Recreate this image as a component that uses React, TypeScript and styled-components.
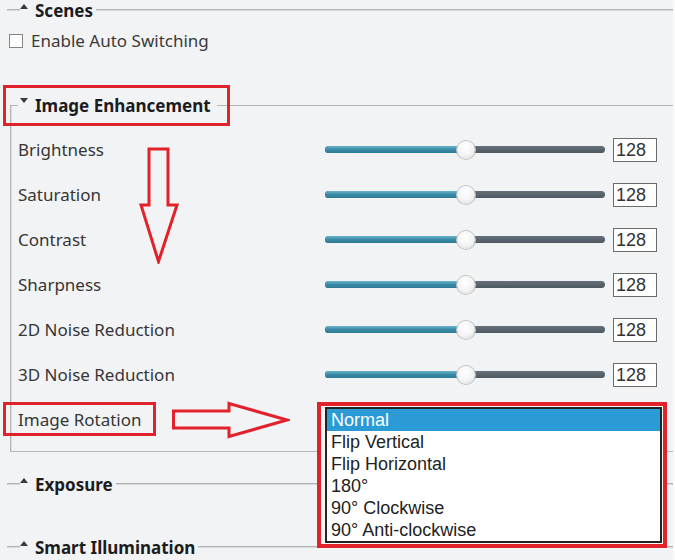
import React from "react";
import styled, { createGlobalStyle } from "styled-components";

const RED = "#e1222b";

const GlobalStyle = createGlobalStyle`
  html, body {
    margin: 0;
    padding: 0;
    background: #fafafa;
  }
  body {
    font-family: "Noto Sans", "Open Sans", sans-serif;
  }
`;

const Page = styled.div`
  width: 673px;
  height: 560px;
  overflow: hidden;
  box-sizing: border-box;
  padding-left: 7px;
  background: #f2f3f5;
  color: #333;
`;

const SectionHead = styled.div<{ $top?: number }>`
  display: flex;
  align-items: center;
  height: 20px;
  margin-top: ${({ $top }) => $top ?? 0}px;
`;

const Rule = styled.div<{ $lead?: boolean }>`
  height: 2px;
  background: linear-gradient(#b3b3b3 50%, #dadada 50%);
  ${({ $lead }) => ($lead ? "width: 13px;" : "flex: 1;")}
`;

const Caret = styled.span<{ $open?: boolean }>`
  align-self: flex-start;
  margin: 4px 7px 0 0;
  width: 0;
  height: 0;
  border-left: 4px solid transparent;
  border-right: 4px solid transparent;
  ${({ $open }) =>
    $open ? "border-top: 5px solid #3a3a3a;" : "border-bottom: 5px solid #3a3a3a;"}
`;

const Title = styled.span`
  font-size: 17px;
  font-weight: 700;
  color: #1c1c1c;
  padding-right: 3px;
  white-space: nowrap;
`;

const CheckRow = styled.label`
  display: flex;
  align-items: center;
  gap: 8px;
  margin-top: 9px;
  padding-left: 2px;
  font-size: 17px;
  color: #3a3a3a;
`;

const CheckBox = styled.span`
  width: 14px;
  height: 14px;
  box-sizing: border-box;
  border: 1px solid #858585;
  background: #fff;
`;

const Group = styled.fieldset`
  margin: 42px 0 0 3px;
  padding: 0 0 9px 7px;
  min-width: 0;
  border: 1px solid #b5b5b5;
  border-right: none;
  box-shadow: inset 1px 0 0 #dcdcdc;
`;

const Legend = styled.legend`
  padding: 0 3px 0 2px;
  display: flex;
  align-items: center;
`;

const LegendInner = styled.span`
  display: flex;
  align-items: center;
`;

// red annotation frame drawn around whatever it wraps
const Callout = styled.span<{ $t: number; $r: number; $b: number; $l: number }>`
  position: relative;
  display: inline-flex;
  align-items: center;
  &::after {
    content: "";
    position: absolute;
    top: ${({ $t }) => -$t}px;
    right: ${({ $r }) => -$r}px;
    bottom: ${({ $b }) => -$b}px;
    left: ${({ $l }) => -$l}px;
    border: 3.5px solid ${RED};
    pointer-events: none;
  }
`;

const Rows = styled.div`
  position: relative;
  padding-top: 10px;
`;

const Row = styled.div`
  display: grid;
  grid-template-columns: 299px 280px 44px;
  column-gap: 8px;
  align-items: center;
  height: 45px;
`;

const Label = styled.span`
  font-size: 17px;
  color: #363636;
  white-space: nowrap;
`;

const Track = styled.div`
  position: relative;
  height: 7px;
  border-radius: 4px;
  background: linear-gradient(#66707a, #4e5861);
`;

const Fill = styled.div`
  position: absolute;
  left: 0;
  top: 0;
  bottom: 0;
  border-radius: 4px;
  background: linear-gradient(#6bb5cc, #3a8aa6 50%, #2d7b96);
`;

const Thumb = styled.div`
  position: absolute;
  top: 50%;
  width: 18px;
  height: 18px;
  margin: -9px 0 0 -9px;
  border-radius: 50%;
  background: radial-gradient(circle at 45% 35%, #ffffff 0%, #f3f3f3 55%, #d2d2d2 100%);
  box-shadow: 0 0 0 1px #c2c2c2;
`;

const ValueBox = styled.div`
  height: 24px;
  box-sizing: border-box;
  border: 1px solid #6b6b6b;
  background: #fff;
  padding-left: 2px;
  font-family: "Liberation Sans", Arial, sans-serif;
  font-size: 18px;
  line-height: 22px;
  color: #333;
`;

const LabelCell = styled.div`
  display: flex;
  align-items: center;
`;

const DownArrow = styled.svg`
  position: absolute;
  left: 121px;
  top: 30px;
`;

const RightArrow = styled.svg`
  margin-left: 30px;
  flex: none;
`;

const ListAnchor = styled.div`
  position: relative;
  grid-column: span 2;
  align-self: stretch;
`;

const ListFrame = styled.div`
  position: absolute;
  left: -8px;
  top: 5px;
  width: 350px;
  box-sizing: border-box;
  border: 4px solid ${RED};
  padding: 1px 1px 1px 4px;
  background: #f7f7f7;
  z-index: 2;
`;

const ListBox = styled.ul`
  margin: 0;
  padding: 0;
  list-style: none;
  border: 2px solid #232323;
  background: #fff;
`;

const Option = styled.li<{ $selected?: boolean }>`
  padding-left: 4px;
  font-family: "Liberation Sans", Arial, sans-serif;
  font-size: 18px;
  line-height: 22px;
  color: ${({ $selected }) => ($selected ? "#fff" : "#222")};
  background: ${({ $selected }) => ($selected ? "#2b9bd6" : "transparent")};
`;

const sliders = [
  "Brightness",
  "Saturation",
  "Contrast",
  "Sharpness",
  "2D Noise Reduction",
  "3D Noise Reduction",
];

const rotations = [
  "Normal",
  "Flip Vertical",
  "Flip Horizontal",
  "180°",
  "90° Clockwise",
  "90° Anti-clockwise",
];

const Slider = ({ value, max }: { value: number; max: number }) => {
  const pct = (value / max) * 100;
  return (
    <Track>
      <Fill style={{ width: `${pct}%` }} />
      <Thumb style={{ left: `${pct}%` }} />
    </Track>
  );
};

const Section = ({ title, top }: { title: string; top?: number }) => (
  <SectionHead $top={top}>
    <Rule $lead />
    <Caret />
    <Title>{title}</Title>
    <Rule />
  </SectionHead>
);

const App = () => {
  return (
    <Page>
      <GlobalStyle />
      <Section title="Scenes" />
      <CheckRow>
        <CheckBox />
        Enable Auto Switching
      </CheckRow>

      <Group>
        <Legend>
          <Callout $t={9} $r={16} $b={9} $l={17}>
            <LegendInner>
              <Caret $open />
              <Title>Image Enhancement</Title>
            </LegendInner>
          </Callout>
        </Legend>
        <Rows>
          <DownArrow width="40" height="117" viewBox="0 0 40 117">
            <path
              d="M10 2 H29 V58 H38 L19.5 114.5 L2 58 H10 Z"
              fill="none"
              stroke={RED}
              strokeWidth="3"
            />
          </DownArrow>
          {sliders.map((name) => (
            <Row key={name}>
              <Label>{name}</Label>
              <Slider value={128} max={255} />
              <ValueBox>128</ValueBox>
            </Row>
          ))}
          <Row>
            <LabelCell>
              <Callout $t={6} $r={14} $b={5} $l={15}>
                <Label>Image Rotation</Label>
              </Callout>
              <RightArrow width="118" height="38" viewBox="0 0 118 38">
                <path
                  d="M1.5 10 H57 V2.5 L115 19 L57 35.5 V27 H1.5 Z"
                  fill="none"
                  stroke={RED}
                  strokeWidth="3"
                />
              </RightArrow>
            </LabelCell>
            <ListAnchor>
              <ListFrame>
                <ListBox>
                  {rotations.map((r, i) => (
                    <Option key={r} $selected={i === 0}>
                      {r}
                    </Option>
                  ))}
                </ListBox>
              </ListFrame>
            </ListAnchor>
          </Row>
        </Rows>
      </Group>

      <Section title="Exposure" top={22} />
      <Section title="Smart Illumination" top={43} />
    </Page>
  );
};

export default App;
